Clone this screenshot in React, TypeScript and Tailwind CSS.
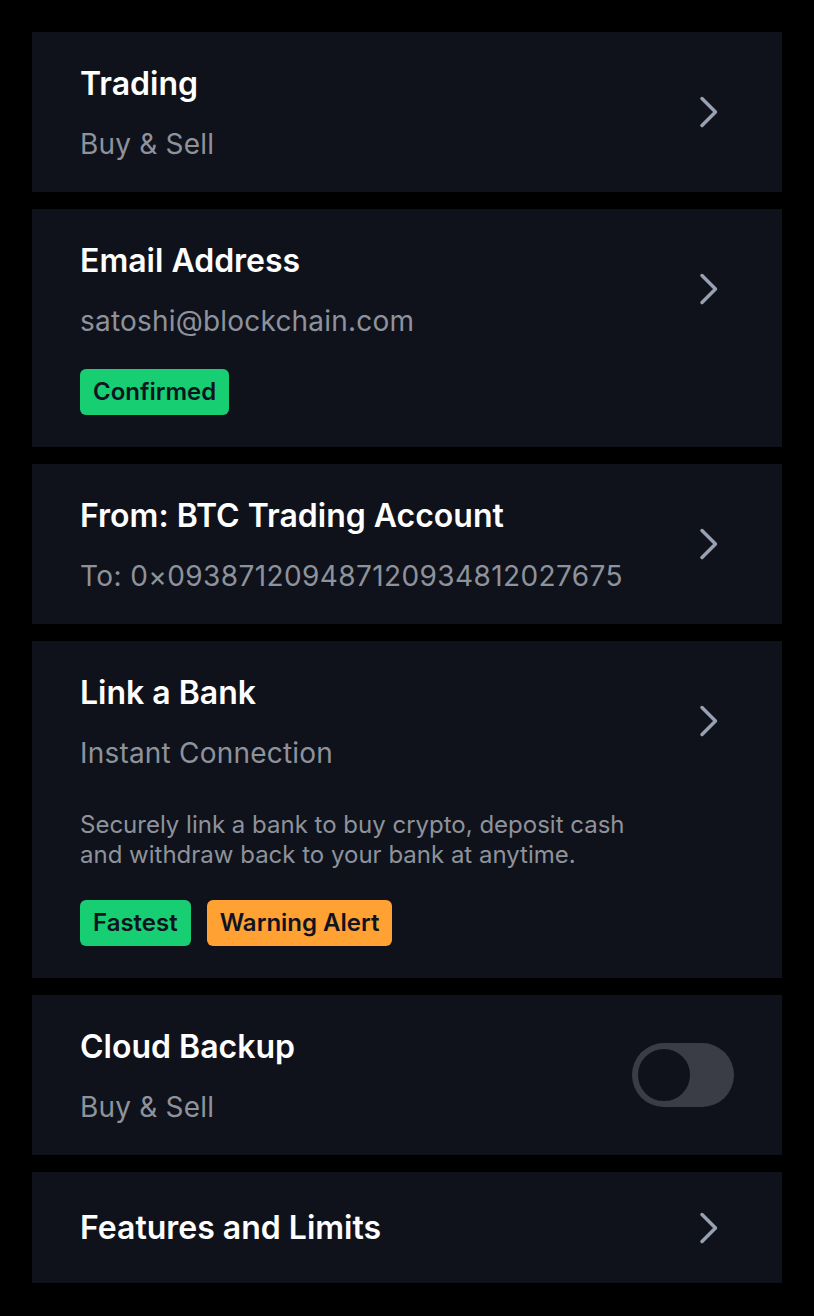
import { ReactNode } from "react";

function Chevron({ className = "" }: { className?: string }) {
  return (
    <svg width="24" height="36" viewBox="0 0 24 36" fill="none" className={`shrink-0 ${className}`}>
      <path d="M8 4.5 L21.5 18 L8 31.5" stroke="#98a1b2" strokeWidth="3.5" strokeLinecap="round" strokeLinejoin="round" />
    </svg>
  );
}

function Badge({ label, color }: { label: string; color: string }) {
  return (
    <span className={`inline-flex h-[46px] items-center rounded-md px-[13px] text-[24px] font-semibold text-[#0f1420] ${color}`}>
      {label}
    </span>
  );
}

interface RowProps {
  title: string;
  subtitle?: string;
  tracking?: string;
  children?: ReactNode;
  right?: ReactNode;
  padding?: string;
}

function Row({ title, subtitle, tracking = "tracking-[0.2px]", children, right, padding = "py-8" }: RowProps) {
  return (
    <div className={`flex bg-[#0f121a] pl-12 pr-16 ${subtitle ? "items-start" : "items-center"} ${padding}`}>
      <div className="flex flex-1 flex-col">
        <h2 className="text-[32px] leading-[40px] font-semibold text-white">{title}</h2>
        {subtitle && <p className={`mt-6 text-[28px] leading-[32px] text-[#8e929c] ${tracking}`}>{subtitle}</p>}
        {children}
      </div>
      {right || <Chevron className={subtitle ? "mt-[30px]" : ""} />}
    </div>
  );
}

function Toggle() {
  return (
    <div className="-mr-[16px] mt-[16px] flex h-[64px] w-[102px] items-center rounded-full bg-[#3a3d46] p-[2px]">
      <div className="h-[60px] w-[60px] rounded-full border-[4px] border-[#3a3d46] bg-[#0f121a]" />
    </div>
  );
}

export default function App() {
  return (
    <div className="min-h-[1316px] bg-black px-8 py-8" style={{ fontFamily: "Inter, sans-serif" }}>
      <div className="flex flex-col gap-[17px]">
        <Row title="Trading" subtitle="Buy & Sell" />
        <Row title="Email Address" subtitle="satoshi@blockchain.com">
          <div className="mt-8 flex">
            <Badge label="Confirmed" color="bg-[#17ce73]" />
          </div>
        </Row>
        <Row title="From: BTC Trading Account" subtitle="To: 0×093871209487120934812027675" tracking="tracking-[0.4px]" />
        <Row title="Link a Bank" subtitle="Instant Connection">
          <p className="mt-[41px] text-[24px] leading-[30px] text-[#8e929c]">
            Securely link a bank to buy crypto, deposit cash
            <br />
            and withdraw back to your bank at anytime.
          </p>
          <div className="mt-[30px] flex gap-4">
            <Badge label="Fastest" color="bg-[#17ce73]" />
            <Badge label="Warning Alert" color="bg-[#ffa133]" />
          </div>
        </Row>
        <Row title="Cloud Backup" subtitle="Buy & Sell" right={<Toggle />} />
        <Row title="Features and Limits" padding="pt-[36px] pb-[35px]" />
      </div>
    </div>
  );
}
